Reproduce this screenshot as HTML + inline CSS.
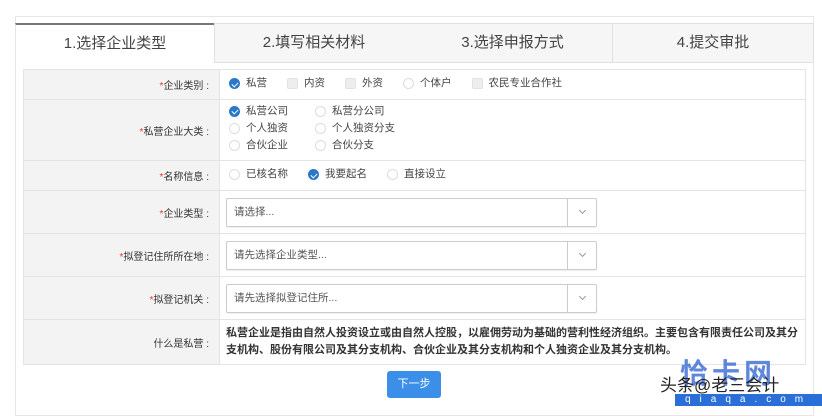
<!DOCTYPE html>
<html><head><meta charset="utf-8"><style>
*{box-sizing:border-box;margin:0;padding:0}
body{width:822px;height:406px;background:#fff;font-family:"Liberation Sans","Noto Sans CJK SC",sans-serif;position:relative;overflow:hidden;color:#333}
.outer{position:absolute;left:15px;top:16px;width:799px;height:400px;border:1px solid #e6e6e6}
.tab{position:absolute;top:23px;height:40px;background:#f6f6f6;border:1px solid #e0e0e0;border-left:none;font-size:15px;color:#444;text-align:center;line-height:38px}
.tab.a{background:#fff;border-top:2px solid #777;border-bottom:none;border-left:1px solid #e6e6e6}
table{position:absolute;left:23px;top:69px;width:783px;border-collapse:collapse;font-size:10px}
td{border:1px solid #e4e4e4;vertical-align:middle}
td.l{width:196px;background:#f3f3f3;text-align:right;padding-right:10px;color:#333}
td.l b{color:#e33;font-weight:normal}
td.r{padding-left:9px;color:#444}
.o{display:inline-flex;align-items:center;margin-right:20px;font-size:10.5px;line-height:13px}
.c{width:11px;height:11px;border-radius:50%;border:1px solid #ddd;margin-right:6px;display:inline-block;background:#fff}
.c.s{background:#2b78c8;border-color:#2b78c8;position:relative}
.c.s:after{content:"";position:absolute;left:3px;top:1.5px;width:3px;height:5px;border:solid #fff;border-width:0 1.5px 1.5px 0;transform:rotate(45deg)}
.c.q{border-radius:2px;background:#eee;border-color:#e2e2e2}
.sel{width:371px;height:29px;border:1px solid #ccc;border-radius:2px;position:relative;font-size:10.5px;color:#555;line-height:27px;padding-left:7px;box-shadow:0 1px 1px #eee}
.sel:after{content:"";position:absolute;right:0;top:0;width:28px;height:27px;border-left:1px solid #ccc}
.sel i{position:absolute;right:11px;top:9px;width:5px;height:5px;border:solid #999;border-width:0 1px 1px 0;transform:rotate(45deg)}
.btn{position:absolute;left:387px;top:371px;width:54px;height:27px;background:#3b8fe8;border-radius:3px;color:#fff;font-size:11px;text-align:center;line-height:27px}
</style></head><body>
<div class="outer"></div>
<div class="tab a" style="left:15px;width:200px">1.选择企业类型</div>
<div class="tab" style="left:214px;width:200px;border-left:1px solid #e0e0e0">2.填写相关材料</div>
<div class="tab" style="left:413px;width:200px">3.选择申报方式</div>
<div class="tab" style="left:613px;width:201px">4.提交审批</div>
<table>
<tr style="height:30px"><td class="l"><b>*</b>企业类别 :</td><td class="r"><span class="o"><span class="c s"></span>私营</span><span class="o"><span class="c q"></span>内资</span><span class="o"><span class="c q"></span>外资</span><span class="o"><span class="c"></span>个体户</span><span class="o"><span class="c q"></span>农民专业合作社</span></td></tr>
<tr style="height:61px"><td class="l"><b>*</b>私营企业大类 :</td><td class="r" style="line-height:15px"><div><span class="o" style="width:70px;margin-right:16px"><span class="c s"></span>私营公司</span><span class="o"><span class="c"></span>私营分公司</span></div><div><span class="o" style="width:70px;margin-right:16px"><span class="c"></span>个人独资</span><span class="o"><span class="c"></span>个人独资分支</span></div><div><span class="o" style="width:70px;margin-right:16px"><span class="c"></span>合伙企业</span><span class="o"><span class="c"></span>合伙分支</span></div></td></tr>
<tr style="height:30px"><td class="l"><b>*</b>名称信息 :</td><td class="r"><span class="o"><span class="c"></span>已核名称</span><span class="o"><span class="c s"></span>我要起名</span><span class="o"><span class="c"></span>直接设立</span></td></tr>
<tr style="height:43px"><td class="l"><b>*</b>企业类型 :</td><td class="r" style="padding-left:6px"><div class="sel">请选择...<i></i></div></td></tr>
<tr style="height:43px"><td class="l"><b>*</b>拟登记住所所在地 :</td><td class="r" style="padding-left:6px"><div class="sel">请先选择企业类型...<i></i></div></td></tr>
<tr style="height:43px"><td class="l"><b>*</b>拟登记机关 :</td><td class="r" style="padding-left:6px"><div class="sel">请先选择拟登记住所...<i></i></div></td></tr>
<tr style="height:45px"><td class="l">什么是私营 :</td><td class="r" style="padding-left:6px;padding-right:6px;font-weight:bold;line-height:17px;color:#333;font-size:11px">私营企业是指由自然人投资设立或由自然人控股，以雇佣劳动为基础的营利性经济组织。主要包含有限责任公司及其分支机构、股份有限公司及其分支机构、合伙企业及其分支机构和个人独资企业及其分支机构。</td></tr>
</table>
<div class="btn">下一步</div>
<div style="position:absolute;left:680px;top:352px;font-size:28px;color:#2a5fd0;font-weight:bold;opacity:.75;letter-spacing:4px">恰卡网</div>
<div style="position:absolute;left:660px;top:371px;font-size:17px;color:#222">头条@老三会计</div>
<div style="position:absolute;left:675px;top:394px;width:147px;height:12px;background:#2a6fd8;color:#fff;font-size:10px;line-height:12px;letter-spacing:9px;padding-left:10px">qiaqa.com</div>
</body></html>
